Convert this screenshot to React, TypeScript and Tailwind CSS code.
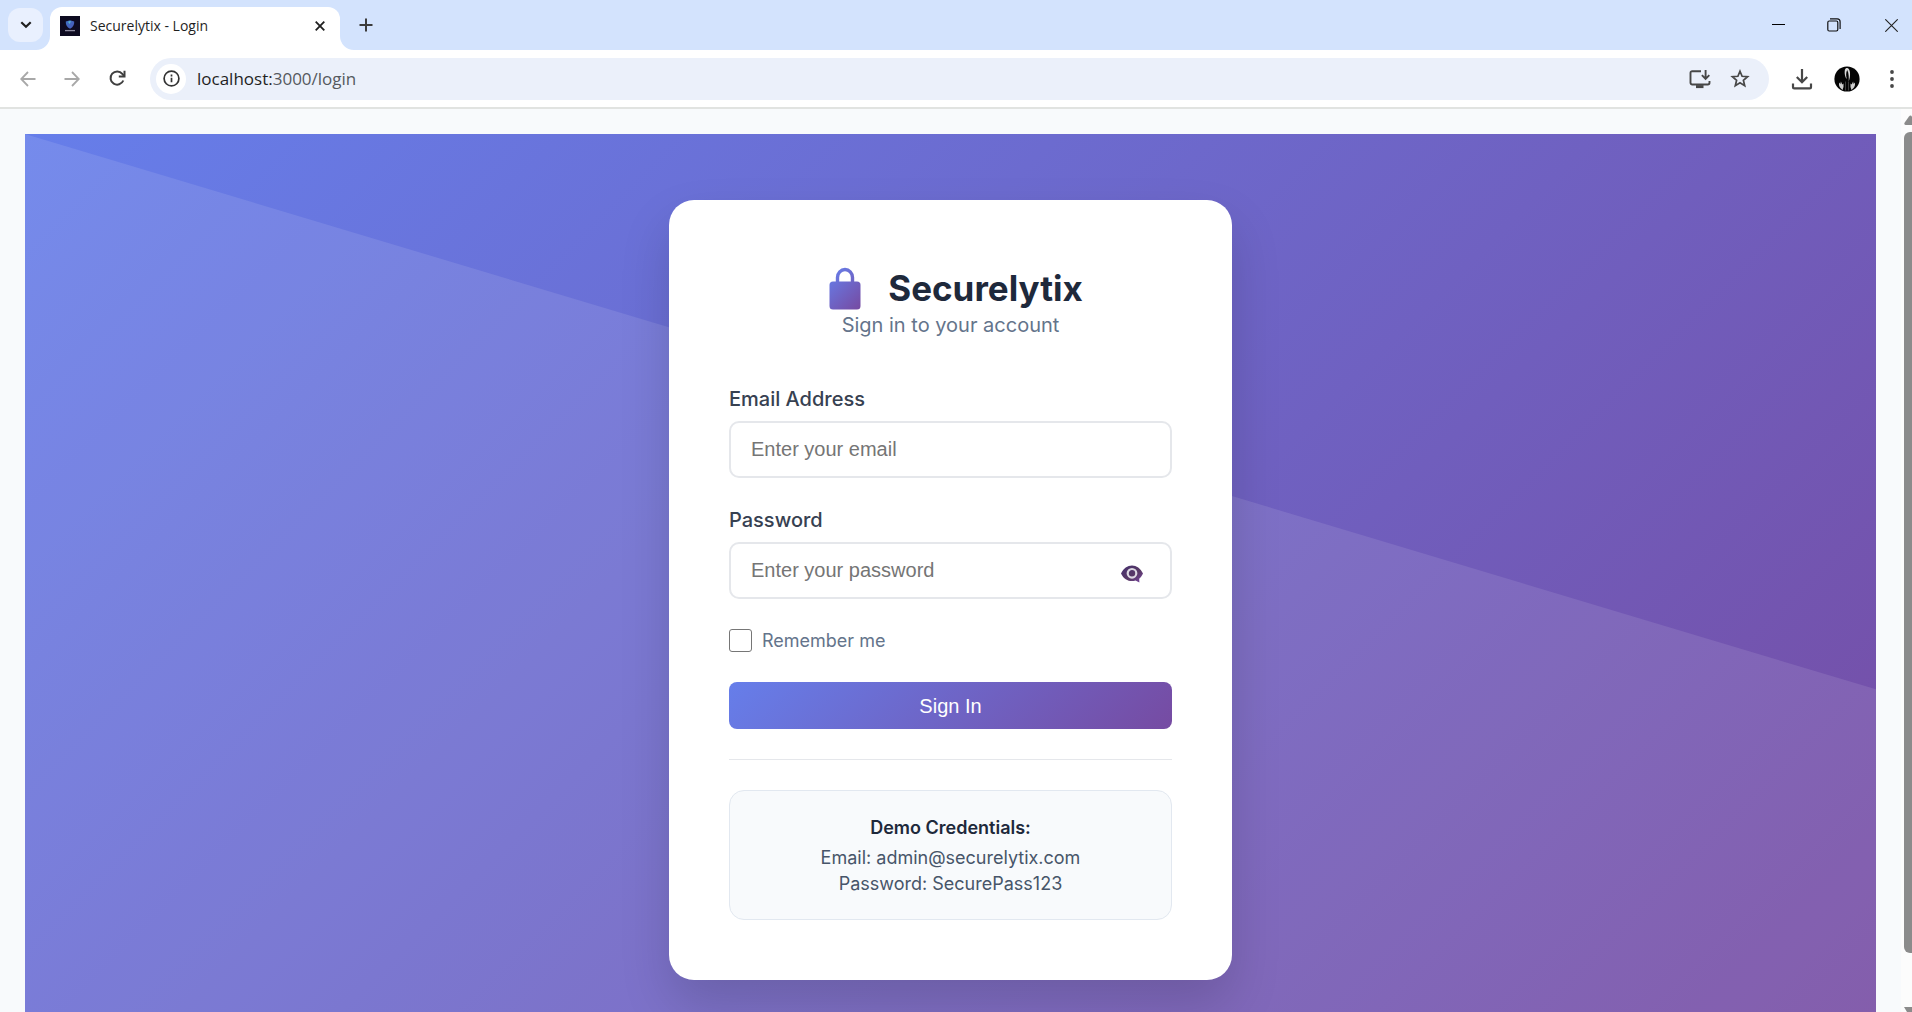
import React, { useState } from "react";

function TabStrip() {
  return (
    <header className="flex h-[50px] shrink-0 items-stretch bg-[#d3e3fd] pl-2 text-[#1f1f1f]">
      <button
        aria-label="Search tabs"
        className="mt-2 flex h-[34px] w-[35px] items-center justify-center rounded-xl bg-[#e9f0fe]"
      >
        <svg width="12" height="8" viewBox="0 0 12 8" fill="none" stroke="#1f1f1f" strokeWidth="2.2">
          <path d="M1.3 1.3 6 5.8l4.7-4.5" />
        </svg>
      </button>
      <div className="relative ml-[7px] mt-[7px] flex flex-[0_0_290px] items-center rounded-t-xl bg-white px-[10px] pb-[6px]">
        <svg className="absolute bottom-0 right-full" width="14" height="14" viewBox="0 0 14 14">
          <path d="M14 0v14H0A14 14 0 0 0 14 0Z" fill="#fff" />
        </svg>
        <svg className="absolute bottom-0 left-full" width="14" height="14" viewBox="0 0 14 14">
          <path d="M0 0v14h14A14 14 0 0 1 0 0Z" fill="#fff" />
        </svg>
        <Favicon />
        <span className="ml-[10px] flex-1 whitespace-nowrap text-[14px] leading-5">Securelytix - Login</span>
        <button aria-label="Close tab" className="flex h-5 w-5 items-center justify-center">
          <svg width="10" height="10" viewBox="0 0 10 10" stroke="#1f1f1f" strokeWidth="1.8">
            <path d="M.7.7l8.6 8.6M9.3.7.7 9.3" />
          </svg>
        </button>
      </div>
      <button aria-label="New tab" className="ml-[18px] flex w-4 items-center justify-center">
        <svg width="14" height="14" viewBox="0 0 14 14" stroke="#3c3c3c" strokeWidth="2">
          <path d="M7 .5v13M.5 7h13" />
        </svg>
      </button>
      <div className="ml-auto flex items-center">
        <button aria-label="Minimize" className="flex h-full w-[56px] items-center justify-center pb-[2px]">
          <svg width="13" height="1" viewBox="0 0 13 1">
            <path d="M0 .5h13" stroke="#000" strokeWidth="1" />
          </svg>
        </button>
        <button aria-label="Restore" className="flex h-full w-[56px] items-center justify-center">
          <svg width="14" height="14" viewBox="0 0 14 14" fill="none" stroke="#111" strokeWidth="1.2">
            <rect x=".8" y="3" width="10" height="10" rx="1.4" />
            <path d="M3 .9h7.2A2.9 2.9 0 0 1 13.1 3.8V11" />
          </svg>
        </button>
        <button aria-label="Close window" className="flex h-full w-[50px] items-center justify-center pl-2">
          <svg width="13" height="13" viewBox="0 0 13 13" stroke="#222" strokeWidth="1.1">
            <path d="M.3.3l12.4 12.4M12.7.3.3 12.7" />
          </svg>
        </button>
      </div>
    </header>
  );
}

function Favicon() {
  return (
    <svg width="20" height="20" viewBox="0 0 20 20">
      <defs>
        <linearGradient id="shield" x1="0" y1="0" x2="1" y2="1">
          <stop offset="0" stopColor="#3c6fc4" />
          <stop offset="1" stopColor="#4a58b8" />
        </linearGradient>
      </defs>
      <rect width="20" height="20" fill="#0d0a20" />
      <path d="M10 4.3l4.2 1.3c.2 3.3-1.1 5.8-4.2 7.2-3.1-1.4-4.4-3.900-4.200-7.200Z" fill="url(#shield)" />
      <path d="M8 5.700l2-.6 1 .4-1.500 2.500Z" fill="#57b6c9" />
      <path d="M5 14.600h10" stroke="#8d8aa0" strokeWidth="1.300" />
    </svg>
  );
}

function Toolbar() {
  return (
    <nav className="flex h-[59px] shrink-0 items-center border-b-2 border-[#e1e3e1] bg-white pr-4 text-[#474747]">
      <button aria-label="Back" className="ml-[19px] flex w-[18px] justify-center">
        <svg width="16" height="16" viewBox="0 0 16 16" fill="none" stroke="#a8a8a8" strokeWidth="1.8">
          <path d="M15.5 8H1.500M8 1 1.200 8 8 15" />
        </svg>
      </button>
      <button aria-label="Forward" className="ml-[26px] flex w-[18px] justify-center">
        <svg width="16" height="16" viewBox="0 0 16 16" fill="none" stroke="#a8a8a8" strokeWidth="1.8">
          <path d="M.5 8h14M8 1l6.800 7L8 15" />
        </svg>
      </button>
      <button aria-label="Reload" className="ml-[27px] flex w-[18px] justify-center">
        <svg width="17" height="17" viewBox="0 0 17 17" fill="none" stroke="#3f3f3f" strokeWidth="2">
          <path d="M14.300 10.500A6.600 6.600 0 1 1 13.300 3.900L15 5.700" />
          <path d="M15.500.8v5.600H9.800" />
        </svg>
      </button>
      <div className="ml-6 flex h-[42px] min-w-0 flex-1 items-center rounded-full bg-[#ebf0fa] pl-[6px] pr-[19px]">
        <button
          aria-label="View site information"
          className="flex h-[30px] w-[30px] shrink-0 items-center justify-center rounded-full bg-white"
        >
          <svg width="17" height="17" viewBox="0 0 17 17" fill="none" stroke="#333" strokeWidth="1.7">
            <circle cx="8.5" cy="8.5" r="7.4" />
            <path d="M8.500 7.700v4.500M8.500 4.600v1.900" />
          </svg>
        </button>
        <span className="ml-[11px] flex-1 whitespace-nowrap pt-px text-[17px] leading-6 text-[#55595e]">
          <span className="text-[#1f1f1f]">localhost:</span>3000/login
        </span>
        <button aria-label="Install app" className="flex">
          <svg width="22" height="20" viewBox="0 0 22 20" fill="none" stroke="#474747" strokeWidth="1.9">
            <path d="M12 2.200H3.200A1.700 1.700 0 0 0 1.500 3.900v9.900a1.700 1.700 0 0 0 1.700 1.700h15.600a1.700 1.700 0 0 0 1.700-1.700V12" />
            <path d="M16.600 1v8.500M12.900 6.200l3.700 3.700 3.700-3.700" />
            <path d="M7 17.600h7.500" strokeWidth="3" />
          </svg>
        </button>
        <button aria-label="Bookmark this tab" className="ml-[19px] flex">
          <svg width="20" height="19" viewBox="0 0 20 19" fill="none" stroke="#474747" strokeWidth="1.7">
            <path d="M10 2.200l2.100 5.100 5.500.4-4.200 3.600 1.300 5.400L10 13.800l-4.700 2.900 1.300-5.400-4.200-3.600 5.500-.4Z" />
          </svg>
        </button>
      </div>
      <button aria-label="Downloads" className="ml-[22px] flex">
        <svg width="22" height="22" viewBox="0 0 22 22" fill="none" stroke="#474747" strokeWidth="2.2">
          <path d="M11 1v12.500M5.800 9l5.200 5.200L16.200 9" />
          <path d="M2 15.500v3.400c0 .8.600 1.400 1.400 1.400h15.200c.8 0 1.400-.6 1.400-1.400v-3.400" />
        </svg>
      </button>
      <button aria-label="Profile" className="ml-[21px] flex">
        <svg width="26" height="26" viewBox="0 0 26 26">
          <circle cx="13" cy="13" r="12.600" fill="#050505" />
          <path
            d="M11 3.500c1.800-3.200 4.700-1 5 3 .2 3.500-.2 6-1.300 9 .2-4 .2-8.500-1.500-11.500-1.300 2.500-1.300 5.500-.4 9-1.600-1.500-2.700-6-1.800-9.500Z"
            fill="#dcdcdc"
          />
          <path d="M6 21.500c-1-1.500-1.300-3-.8-5l1.200 1.500.5-2.500 1.400 3 1.200-1v3.500L8.500 24Z" fill="#cfcfcf" />
          <path d="M20 21.500c1-1.500 1.300-3 .8-5L19.600 18l-.5-2.500-1.400 3-1.200-1v3.500l1 3Z" fill="#cfcfcf" />
          <path d="M11.500 15.500v9M14.500 15.500v9" stroke="#444" strokeWidth=".9" />
        </svg>
      </button>
      <button aria-label="Menu" className="ml-[28px] flex">
        <svg width="8" height="20" viewBox="0 0 8 20" fill="#474747">
          <circle cx="4" cy="3" r="1.9" />
          <circle cx="4" cy="10" r="1.9" />
          <circle cx="4" cy="17" r="1.9" />
        </svg>
      </button>
    </nav>
  );
}

function LockIcon() {
  return (
    <svg width="50" height="44" viewBox="0 0 50 44" aria-hidden="true">
      <defs>
        <linearGradient id="lock" gradientUnits="userSpaceOnUse" x1="6" y1="3" x2="48" y2="45">
          <stop offset=".1" stopColor="#667eea" />
          <stop offset=".9" stopColor="#764ba2" />
        </linearGradient>
      </defs>
      <path d="M19.500 18v-6.500a7.500 8 0 0 1 15 0V18" fill="none" stroke="url(#lock)" strokeWidth="3.400" />
      <rect x="11.500" y="15.500" width="31" height="28" rx="3.500" fill="url(#lock)" />
    </svg>
  );
}

function EyeIcon() {
  return (
    <svg width="24" height="20" viewBox="0 0 24 20" aria-hidden="true">
      <defs>
        <linearGradient id="eye" x1="0" y1="0" x2="1" y2="1">
          <stop offset="0" stopColor="#45306e" />
          <stop offset=".6" stopColor="#5a3a66" />
          <stop offset="1" stopColor="#7a45a8" />
        </linearGradient>
      </defs>
      <path
        d="M1 9.500C3.500 4.200 7.500 1.500 12 1.500S20.500 4.200 23 9.500c-1 2.200-2.300 4-3.800 5.200l.2 3.800-3.900-2c-1.100.4-2.300.6-3.500.6-4.500 0-8.500-2.400-11-7.600Z"
        fill="url(#eye)"
      />
      <circle cx="12" cy="9.300" r="4.300" fill="none" stroke="#ddd8e2" strokeWidth="2.200" />
    </svg>
  );
}

const labelClass = "block text-[20px] font-medium leading-6 text-[#374151]";
const inputClass =
  "mt-[10px] block h-[57px] w-full rounded-[10px] border-2 border-[#e5e7eb] bg-white px-5 font-['Liberation_Sans',Arial,sans-serif] text-[20px] text-[#1f2937] outline-none placeholder:text-[#757575]";

function LoginCard() {
  const [visible, setVisible] = useState(false);
  return (
    <div className="relative w-full max-w-[563px] rounded-[25px] bg-white p-[60px] shadow-[0_25px_50px_rgba(0,0,0,0.15)]">
      <div className="mb-12 text-center">
        <h1 className="flex h-[52px] items-center justify-center gap-5 pt-1 text-[35px] font-bold text-[#1e293b]">
          <LockIcon />
          Securelytix
        </h1>
        <p className="text-[20px] leading-[27px] text-[#64748b]">Sign in to your account</p>
      </div>
      <form onSubmit={(e) => e.preventDefault()}>
        <label htmlFor="email" className={labelClass}>
          Email Address
        </label>
        <input id="email" type="email" placeholder="Enter your email" className={inputClass} />
        <label htmlFor="password" className={labelClass + " mt-[30px]"}>
          Password
        </label>
        <div className="relative">
          <input
            id="password"
            type={visible ? "text" : "password"}
            placeholder="Enter your password"
            className={inputClass}
          />
          <button
            type="button"
            aria-label="Show password"
            onClick={() => setVisible(!visible)}
            className="absolute right-7 top-[22px] flex"
          >
            <EyeIcon />
          </button>
        </div>
        <label className="mt-[30px] flex items-center gap-[10px] text-[18px] leading-[23px] text-[#64748b]">
          <input
            type="checkbox"
            className="h-[23px] w-[23px] appearance-none rounded-[3px] border border-[#767676] bg-white checked:bg-[#667eea]"
          />
          Remember me
        </label>
        <button
          type="submit"
          className="mt-[30px] h-[47px] w-full rounded-lg bg-[linear-gradient(135deg,#667eea_0%,#764ba2_100%)] font-['Liberation_Sans',Arial,sans-serif] text-[20px] text-white"
        >
          Sign In
        </button>
      </form>
      <div className="mt-[30px] border-t border-[#e5e7eb] pt-[30px]">
        <div className="rounded-[15px] border border-[#e2e8f0] bg-[#f8fafc] px-6 pb-[22px] pt-[25px] text-center text-[18px] leading-[26px] text-[#475569]">
          <h2 className="mb-[5px] text-[18px] font-semibold leading-6 text-[#1e293b]">Demo Credentials:</h2>
          <p>Email: admin@securelytix.com</p>
          <p>Password: SecurePass123</p>
        </div>
      </div>
    </div>
  );
}

function Scrollbar() {
  return (
    <div className="flex w-[11px] shrink-0 flex-col overflow-hidden bg-[#fcfcfc] pl-[3px]" aria-hidden="true">
      <svg className="mt-[6px] shrink-0" width="16" height="10" viewBox="0 0 16 10">
        <path d="M1.500 10Q-.5 9.500.7 7.500L5 1.500Q6.500-.5 8 1.500L14 10Z" fill="#8b8b8b" />
      </svg>
      <div className="mt-[7px] flex-1 rounded-l-md bg-[#8b8b8b]" />
      <svg className="mt-[54px] shrink-0" width="16" height="5" viewBox="0 0 16 5">
        <path d="M0 0h14L10 5H3Z" fill="#8b8b8b" />
      </svg>
    </div>
  );
}

export default function App() {
  return (
    <div className="flex h-screen flex-col overflow-hidden bg-white font-['Inter',sans-serif]">
      <div className="font-['Open_Sans','Noto_Sans',sans-serif]">
        <TabStrip />
        <Toolbar />
      </div>
      <div className="flex min-h-0 flex-1 bg-[#f8fafc]">
        <main className="min-w-0 flex-1 overflow-hidden p-[25px]">
          <section className="relative flex h-[calc(100vh-100px)] items-center justify-center overflow-hidden bg-[linear-gradient(135deg,#667eea_0%,#764ba2_100%)]">
            <svg
              className="absolute inset-0 h-full w-full"
              viewBox="0 0 1000 1000"
              preserveAspectRatio="xMinYMin slice"
              aria-hidden="true"
            >
              <path d="M0 0 1000 300V1000H0Z" fill="#fff" fillOpacity=".1" />
            </svg>
            <LoginCard />
          </section>
        </main>
        <Scrollbar />
      </div>
    </div>
  );
}
